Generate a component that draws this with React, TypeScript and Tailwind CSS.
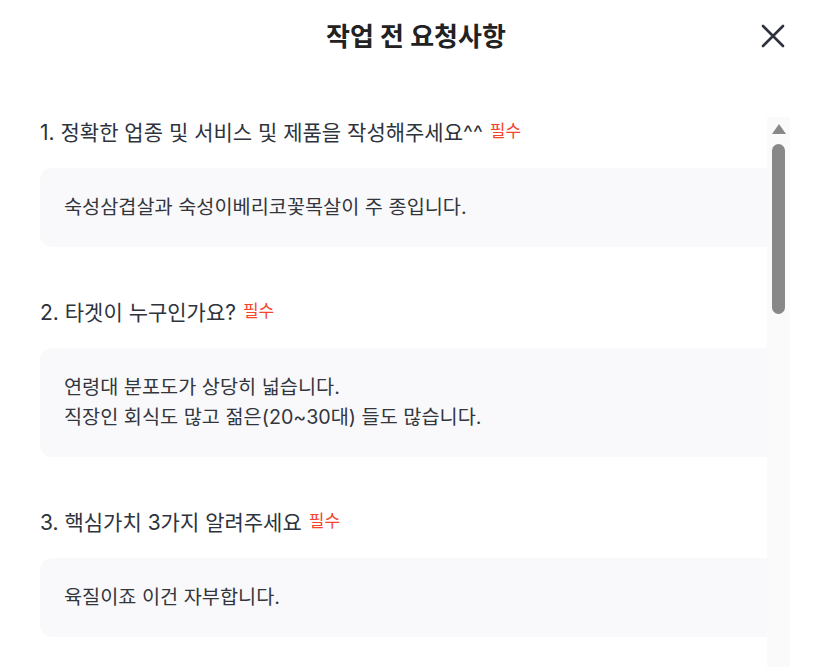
import React from "react";

const items = [
  { q: "1. 정확한 업종 및 서비스 및 제품을 작성해주세요^^", a: ["숙성삼겹살과 숙성이베리코꽃목살이 주 종입니다."] },
  { q: "2. 타겟이 누구인가요?", a: ["연령대 분포도가 상당히 넓습니다.", "직장인 회식도 많고 젊은(20~30대) 들도 많습니다."] },
  { q: "3. 핵심가치 3가지 알려주세요", a: ["육질이죠 이건 자부합니다."] },
];

export default function App() {
  return (
    <div
      className="w-[832px] h-[667px] bg-white overflow-hidden flex flex-col"
      style={{ fontFamily: 'Inter, "Noto Sans CJK KR", sans-serif' }}
    >
      <div className="h-[117px] shrink-0 relative">
        <div className="h-[72px] flex items-center justify-center">
          <h1 className="text-[26px] font-bold text-[#222]">작업 전 요청사항</h1>
        </div>
        <button className="absolute left-[759px] top-[22px] w-[28px] h-[28px] flex items-center justify-center">
          <svg width="26" height="26" viewBox="0 0 26 26" fill="none" stroke="#2d3140" strokeWidth="2.6" strokeLinecap="round">
            <path d="M3 3 L23 23 M23 3 L3 23" />
          </svg>
        </button>
      </div>
      <div className="flex flex-1 min-h-0">
        <div className="w-[767px] shrink-0 pl-[40px] pt-[3px]">
          {items.map((it, i) => (
            <div key={i} className={i === 0 ? "" : "mt-[53px]"}>
              <div className="flex items-center h-[26px] text-[21px] text-[#2e333d] whitespace-nowrap">
                <span>{it.q}</span>
                <span className="ml-[7px] text-[17px] text-[#f5452f] -mt-[3px]">필수</span>
              </div>
              <div className="mt-[22px] rounded-l-[12px] bg-[#f9f9fb] pl-[24px] pt-[24px] pb-[25px] text-[19.7px] leading-[30px] text-[#33363d] whitespace-nowrap">
                {it.a.map((l, j) => (
                  <div key={j}>{l}</div>
                ))}
              </div>
            </div>
          ))}
        </div>
        <div className="w-[23px] shrink-0 bg-[#fafafa] flex flex-col items-center">
          <svg width="16" height="12" viewBox="0 0 16 12" className="mt-[6px]">
            <path d="M8 1 L15 11 L1 11 Z" fill="#888" />
          </svg>
          <div className="mt-[9px] w-[13px] h-[170px] rounded-full bg-[#888]" />
        </div>
      </div>
    </div>
  );
}
